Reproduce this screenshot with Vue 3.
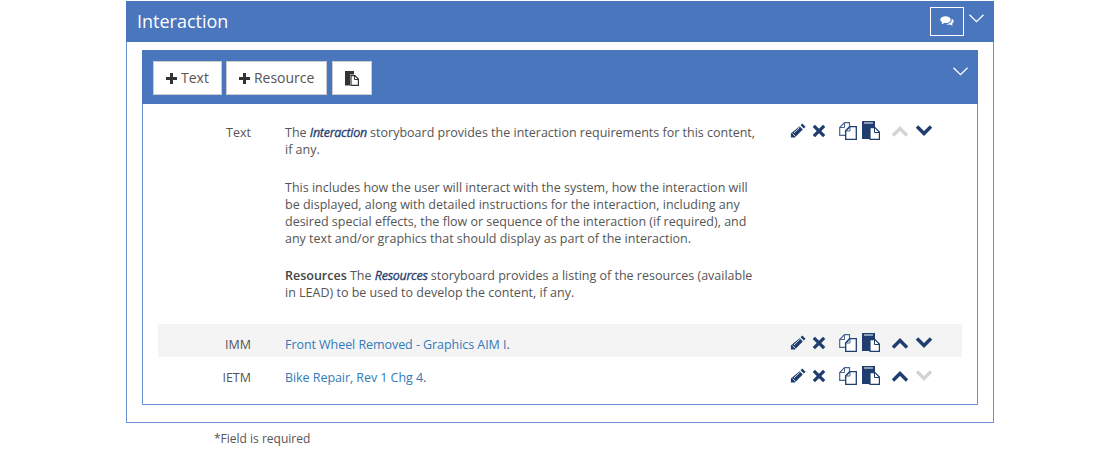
<script setup>
const rows = [
  { id: 'text', label: 'Text', up: false, down: true, rich: true },
  { id: 'imm', label: 'IMM', link: 'Front Wheel Removed - Graphics AIM I', up: true, down: true, shaded: true },
  { id: 'ietm', label: 'IETM', link: 'Bike Repair, Rev 1 Chg 4', up: true, down: false }
]
</script>

<template>
  <div class="page">
    <section class="outer">
      <header class="outer-head">
        <h1>Interaction</h1>
        <button class="comment" aria-label="Comments">
          <svg width="14" height="11" viewBox="0 0 14 11"><path fill="#fff" d="M5.500.3c2.900 0 5.200 1.500 5.200 3.400S8.400 7.100 5.500 7.100c-.5 0-1 0-1.400-.1C3.400 7.700 2.300 8.200 1.200 8.200c.6-.5 1-1.200 1.100-2C1 5.600.3 4.700.3 3.700.3 1.800 2.600.3 5.500.3z"/><path fill="#fff" d="M11.700 2.700c1.200.6 2 1.500 2 2.600 0 1-.7 1.900-1.800 2.500.1.800.5 1.500 1.100 2-1.100 0-2.100-.5-2.800-1.200-.4.1-.8.100-1.300.100-1.100 0-2.200-.3-3-.8C9 7.900 12 6.300 11.700 3.700z"/></svg>
        </button>
        <button class="chev" aria-label="Collapse">
          <svg width="15" height="9" viewBox="0 0 15 9"><path d="M.5.700L7.500 7.700 14.500.700" fill="none" stroke="#fff" stroke-width="1.300"/></svg>
        </button>
      </header>

      <div class="outer-body">
        <section class="inner">
          <header class="inner-head">
            <button class="btn">
              <svg class="plus" width="11" height="11" viewBox="0 0 11 11"><path fill="#333" d="M4 0h3v4h4v3H7v4H4V7H0V4h4z"/></svg>
              Text
            </button>
            <button class="btn">
              <svg class="plus" width="11" height="11" viewBox="0 0 11 11"><path fill="#333" d="M4 0h3v4h4v3H7v4H4V7H0V4h4z"/></svg>
              Resource
            </button>
            <button class="btn icon-btn" aria-label="Paste">
              <svg width="14" height="15" viewBox="0 0 14 15"><path fill="#333" d="M0 0h9v3.500H5v11H0z"/><path fill="#fff" stroke="#333" stroke-width="1.200" d="M6 4.600h4l3.400 3.400v6.400H6z"/><path fill="none" stroke="#333" d="M9.500 4.600v3.900h3.900"/></svg>
            </button>
            <button class="chev inner-chev" aria-label="Collapse">
              <svg width="15" height="9" viewBox="0 0 15 9"><path d="M.5.700L7.500 7.700 14.500.700" fill="none" stroke="#fff" stroke-width="1.300"/></svg>
            </button>
          </header>

          <div class="inner-body">
            <div v-for="r in rows" :key="r.id" class="row" :class="{ shaded: r.shaded, 'row-text': r.rich }">
              <div class="label">{{ r.label }}</div>
              <div v-if="r.rich" class="content">
                <p>The <em>Interaction</em> storyboard provides the interaction requirements for this content, if any.</p>
                <p>This includes how the user will interact with the system, how the interaction will be displayed, along with detailed instructions for the interaction, including any desired special effects, the flow or sequence of the interaction (if required), and any text and/or graphics that should display as part of the interaction.</p>
                <p><strong>Resources</strong> The <em>Resources</em> storyboard provides a listing of the resources (available in LEAD) to be used to develop the content, if any.</p>
              </div>
              <div v-else class="content"><a href="#">{{ r.link }}</a>.</div>
              <div class="tools">
                <svg class="i-pencil" width="16" height="16" viewBox="0 0 16 16"><path fill="#1f3d6e" d="M12.300.5l3.200 3.200-1.700 1.700-3.200-3.200zM9.600 3.200l3.200 3.200-7.900 8.100H.9v-4z"/><path fill="none" stroke="#fff" stroke-width=".8" d="M2.500 10.500l3 3M4 10L9.700 4.400"/></svg>
                <svg class="i-x" width="14" height="14" viewBox="0 0 14 14"><path fill="#1f3d6e" d="M3 .8L7 4.700 11 .8 13.300 3 9.300 7l4 4-2.300 2.200-4-3.900-4 3.900L.7 11l4-4-4-4z"/></svg>
                <svg class="i-copy" width="18" height="18" viewBox="0 0 18 18"><path fill="#fff" stroke="#47648f" stroke-width="1.200" d="M5.500.7h5v4L6.500 8.700v4.600H.7V5.500z"/><path fill="none" stroke="#47648f" d="M1 5.500h4.500V1"/><path fill="#fff" stroke="#1f3d6e" stroke-width="1.300" d="M11 4.700h6.300v12.600H6.700V9z"/><path fill="none" stroke="#47648f" d="M7 9h4V5"/></svg>
                <svg class="i-paste" width="18" height="19" viewBox="0 0 18 19"><path fill="#1f3d6e" d="M0 0h13v6H8v12H0z"/><path fill="#fff" d="M2 1.500h9v1H2z"/><path fill="#fff" stroke="#1f3d6e" stroke-width="1.200" d="M8 6.600h5l4.400 4.400v7.400H8z"/><path fill="none" stroke="#1f3d6e" d="M12.500 6.600v4.900h4.900"/></svg>
                <svg class="i-chev" width="18" height="12" viewBox="0 0 18 12"><path fill="none" :stroke="r.up ? '#1f3d6e' : '#d4d4d4'" stroke-width="3.400" d="M2 10.500L9 3.500l7 7"/></svg>
                <svg class="i-chev" width="18" height="12" viewBox="0 0 18 12"><path fill="none" :stroke="r.down ? '#1f3d6e' : '#d4d4d4'" stroke-width="3.400" d="M2 1.500l7 7 7-7"/></svg>
              </div>
            </div>
          </div>
        </section>
      </div>
    </section>
    <div class="required">*Field is required</div>
  </div>
</template>

<style>
html, body { margin: 0; background: #fff; }
</style>

<style scoped>
.page {
  width: 868px;
  margin: 0 auto;
  padding-top: 1px;
  font-family: "Open Sans", "Liberation Sans", sans-serif;
  font-size: 12.5px;
  color: #555;
}
.outer { border: 1px solid #6b90d2; border-top: 0; }
.outer-head {
  height: 41px;
  margin: 0 -1px;
  background: #4a76bd;
  display: flex;
  align-items: flex-start;
  padding: 0 1px 0 11px;
}
h1 {
  margin: 0;
  flex: 1;
  font-size: 18px;
  font-weight: 400;
  line-height: 40px;
  color: #fff;
}
button { font-family: inherit; }
.comment {
  width: 34px;
  height: 29px;
  margin: 6px 0 0;
  padding: 0;
  border: 1px solid #fff;
  background: transparent;
  display: flex;
  align-items: center;
  justify-content: center;
}
.chev {
  width: 24px;
  height: 20px;
  padding: 0;
  border: 0;
  background: transparent;
  display: flex;
  align-items: center;
  justify-content: center;
  margin: 7px 5px 0 0;
}
.outer-body { padding: 8px 15px 17px; }
.inner { border: 1px solid #6b90d2; border-top: 0; }
.inner-head {
  height: 54px;
  margin: 0 -1px;
  background: #4a76bd;
  padding: 11px 0 0 11px;
  box-sizing: border-box;
  display: flex;
  align-items: flex-start;
  gap: 4px;
}
.btn {
  height: 34px;
  padding: 0 12px 2px;
  border: 1px solid #ccc;
  background: #fff;
  color: #555;
  font-size: 14px;
  display: flex;
  align-items: center;
  gap: 4px;
}
.plus { flex: none; margin-top: 2px; }
.icon-btn { margin-left: 1px; padding: 0 12px; }
.inner-chev { margin: 0 6px 0 auto; }
.inner-body { padding: 20px 15px 14px; }
.row {
  display: grid;
  grid-template-columns: 93px 478px 1fr;
  column-gap: 34px;
  align-items: start;
  line-height: 17px;
}
.row.row-text { height: 200px; padding-top: 0; }
.row { height: 33px; padding-top: 12px; box-sizing: border-box; }
.row.shaded { background: #f4f4f4; }
.label { text-align: right; }
.content p { margin: 0 0 20.5px; }
.content em { color: #1f3d6e; font-weight: 400; letter-spacing: -.28px; -webkit-text-stroke: .3px #1f3d6e; }
.content strong { font-weight: 600; color: #444; }
.content a { color: #337ab7; text-decoration: none; letter-spacing: -.06px; }
.tools {
  display: flex;
  align-items: center;
  height: 17px;
  margin: -2px 0 0 -7px;
}
.i-pencil { margin-right: 6px; flex: none; }
.i-x { margin-right: 13px; flex: none; }
.i-copy { margin-right: 5px; flex: none; }
.i-paste { margin-right: 11px; flex: none; }
.i-chev { margin-right: 6px; flex: none; }
.required { margin: 8px 0 0 88px; font-size: 12px; line-height: 16px; }
</style>
